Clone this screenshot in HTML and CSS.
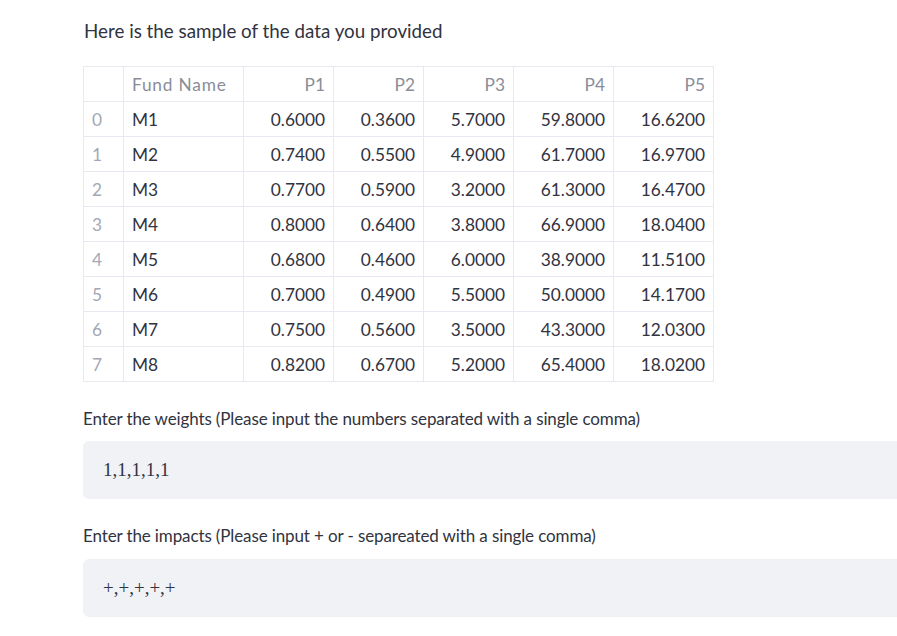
FILE: index.html
```html
<!DOCTYPE html>
<html>
<head>
<meta charset="utf-8">
<link rel="stylesheet" href="styles.css">
</head>
<body>
<main class="main">
  <p class="heading">Here is the sample of the data you provided</p>
  <table class="df">
    <thead>
      <tr><th class="idx"></th><th class="name">Fund Name</th><th>P1</th><th>P2</th><th>P3</th><th class="wide">P4</th><th class="wide">P5</th></tr>
    </thead>
    <tbody>
      <tr><td class="idx">0</td><td class="name">M1</td><td>0.6000</td><td>0.3600</td><td>5.7000</td><td>59.8000</td><td>16.6200</td></tr>
      <tr><td class="idx">1</td><td class="name">M2</td><td>0.7400</td><td>0.5500</td><td>4.9000</td><td>61.7000</td><td>16.9700</td></tr>
      <tr><td class="idx">2</td><td class="name">M3</td><td>0.7700</td><td>0.5900</td><td>3.2000</td><td>61.3000</td><td>16.4700</td></tr>
      <tr><td class="idx">3</td><td class="name">M4</td><td>0.8000</td><td>0.6400</td><td>3.8000</td><td>66.9000</td><td>18.0400</td></tr>
      <tr><td class="idx">4</td><td class="name">M5</td><td>0.6800</td><td>0.4600</td><td>6.0000</td><td>38.9000</td><td>11.5100</td></tr>
      <tr><td class="idx">5</td><td class="name">M6</td><td>0.7000</td><td>0.4900</td><td>5.5000</td><td>50.0000</td><td>14.1700</td></tr>
      <tr><td class="idx">6</td><td class="name">M7</td><td>0.7500</td><td>0.5600</td><td>3.5000</td><td>43.3000</td><td>12.0300</td></tr>
      <tr><td class="idx">7</td><td class="name">M8</td><td>0.8200</td><td>0.6700</td><td>5.2000</td><td>65.4000</td><td>18.0200</td></tr>
    </tbody>
  </table>
  <label class="field">
    <span class="label">Enter the weights (Please input the numbers separated with a single comma)</span>
    <input class="input" type="text" value="1,1,1,1,1">
  </label>
  <label class="field">
    <span class="label">Enter the impacts (Please input + or - separeated with a single comma)</span>
    <input class="input" type="text" value="+,+,+,+,+">
  </label>
</main>
</body>
</html>
```
FILE: styles.css
```css
html, body {
  margin: 0;
  padding: 0;
  background: #ffffff;
  overflow: hidden;
}
.main {
  padding: 18px 0 0 83px;
  font-family: "Lato", "Open Sans", sans-serif;
  color: #31333f;
}
.heading {
  margin: 0 0 22px 1px;
  font-size: 18.8px;
  line-height: 26px;
  color: #31333f;
}
.df {
  border-collapse: collapse;
  font-size: 17.3px;
  color: #31333f;
}
.df th, .df td {
  border: 1px solid #e6e9ef;
  height: 35px;
  padding: 0 8px;
  text-align: right;
  font-weight: 400;
  box-sizing: border-box;
  width: 90px;
}
.df th {
  color: #8a8d99;
}
.df .idx {
  width: 40px;
  text-align: left;
  color: #a3a8b4;
}
.df .name {
  width: 120px;
  text-align: left;
}
.df th.name {
  letter-spacing: 0.8px;
}
.df .wide {
  width: 100px;
}
.field {
  display: flex;
  flex-direction: column;
  width: 840px;
}
.label {
  margin-top: 24px;
  font-size: 17px;
  line-height: 26px;
  letter-spacing: -0.12px;
  color: #31333f;
}
.input {
  margin-top: 9px;
  height: 58px;
  box-sizing: border-box;
  border: none;
  border-radius: 6px;
  background: #f0f2f6;
  padding: 0 20px;
  font-family: "Liberation Serif", serif;
  font-size: 19px;
  color: #31333f;
  outline: none;
}
.field + .field .input {
  margin-top: 10px;
}
```
